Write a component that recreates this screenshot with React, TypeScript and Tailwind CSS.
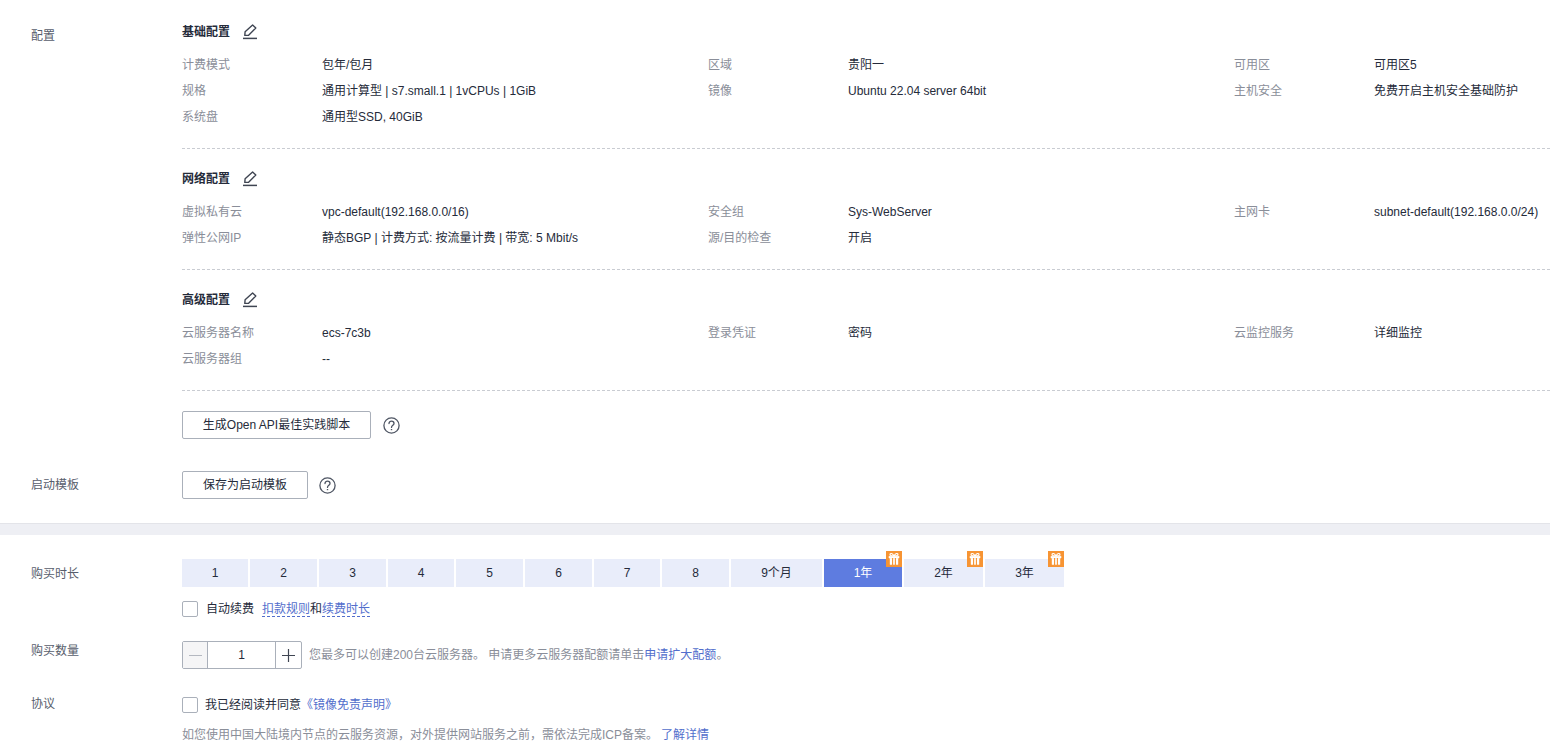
import { Fragment } from "react";

const sections = [
  {
    title: "基础配置",
    rows: [
      ["计费模式", "包年/包月", "区域", "贵阳一", "可用区", "可用区5"],
      ["规格", "通用计算型 | s7.small.1 | 1vCPUs | 1GiB", "镜像", "Ubuntu 22.04 server 64bit", "主机安全", "免费开启主机安全基础防护"],
      ["系统盘", "通用型SSD, 40GiB", "", "", "", ""],
    ],
  },
  {
    title: "网络配置",
    rows: [
      ["虚拟私有云", "vpc-default(192.168.0.0/16)", "安全组", "Sys-WebServer", "主网卡", "subnet-default(192.168.0.0/24)"],
      ["弹性公网IP", "静态BGP | 计费方式: 按流量计费 | 带宽: 5 Mbit/s", "源/目的检查", "开启", "", ""],
    ],
  },
  {
    title: "高级配置",
    rows: [
      ["云服务器名称", "ecs-7c3b", "登录凭证", "密码", "云监控服务", "详细监控"],
      ["云服务器组", "--", "", "", "", ""],
    ],
  },
];

const months = [
  { label: "1", w: "w-[66px]" },
  { label: "2", w: "w-[67px]" },
  { label: "3", w: "w-[67px]" },
  { label: "4", w: "w-[66px]" },
  { label: "5", w: "w-[67px]" },
  { label: "6", w: "w-[67px]" },
  { label: "7", w: "w-[66px]" },
  { label: "8", w: "w-[67px]" },
  { label: "9个月", w: "w-[91px]" },
  { label: "1年", w: "w-[78px]", gift: true, active: true },
  { label: "2年", w: "w-[79px]", gift: true },
  { label: "3年", w: "w-[79px]", gift: true },
];

function EditIcon() {
  return (
    <svg width="16" height="16" viewBox="0 0 16 16" fill="none" stroke="#3f4552" strokeWidth="1.4">
      <path d="M2.8 11.4 L3.1 7.8 L10.6 1 L13.8 3.9 L6.6 11.2 Z" strokeLinejoin="round" />
      <path d="M1 14.4 H15" strokeWidth="1.5" />
    </svg>
  );
}

function HelpIcon() {
  return (
    <svg width="17" height="17" viewBox="0 0 17 17" fill="none" stroke="#4f5664" strokeWidth="1.3">
      <circle cx="8.5" cy="8.5" r="7.6" />
      <path d="M6 6.6 C6 4.9 7.2 4.2 8.5 4.2 C9.9 4.2 11 5 11 6.4 C11 8.2 8.5 8.2 8.5 10.4" strokeLinecap="round" />
      <path d="M8.5 12 V13.2" strokeWidth="1.4" />
    </svg>
  );
}

function GiftIcon() {
  return (
    <span className="absolute right-0 top-[-8px] flex h-4 w-4 items-center justify-center bg-[#f79433]">
      <svg width="14" height="14" viewBox="0 0 14 14" fill="none" stroke="#fff">
        {/* bow loops */}
        <path d="M7 4 C5.5 1 3 1 3 2.6 C3 3.6 4.5 4 7 4 C9.5 4 11 3.6 11 2.6 C11 1 8.5 1 7 4" strokeWidth="1.1" />
        {/* lid and box */}
        <path d="M2 4.2 H12 V6 H2 Z" fill="#fff" strokeWidth="0.6" />
        <path d="M3 6.2 H11 V12.6 H3 Z" fill="#fff" strokeWidth="0.4" />
        <path d="M5.6 6 V13 M8.4 6 V13" stroke="#f79433" strokeWidth="1.1" />
      </svg>
    </span>
  );
}

function Checkbox() {
  return <span className="h-4 w-4 shrink-0 rounded-[2px] border border-[#aab0ba] bg-white" />;
}

export default function App() {
  return (
    <div
      className="h-[752px] w-[1550px] overflow-hidden bg-white text-xs text-[#252b3a]"
      style={{ fontFamily: '"Liberation Sans", "Noto Sans CJK SC", sans-serif' }}
    >
      {/* 配置 */}
      <div className="flex h-[523px] pl-[31px] pt-[18px]">
        <div className="w-[151px] pt-[10px] text-[#575d6c]">配置</div>
        <div className="flex-1">
          {sections.map((s) => (
            <div key={s.title} className="mb-[16px] border-b border-dashed border-[#c9ccd2] pb-[18px]">
              <div className="mb-[6px] flex h-[28px] items-center gap-[12px]">
                <span className="font-bold text-[#252b3a]">{s.title}</span>
                <EditIcon />
              </div>
              <div className="grid grid-cols-[140px_386px_140px_386px_140px_176px]">
                {s.rows.map((row, i) => (
                  <Fragment key={i}>
                    {row.map((text, j) => (
                      <div
                        key={j}
                        className={
                          j % 2 === 0
                            ? "h-[26px] whitespace-nowrap leading-[26px] text-[#8a8e99]"
                            : "h-[26px] whitespace-nowrap leading-[26px] text-[#252b3a]"
                        }
                      >
                        {text}
                      </div>
                    ))}
                  </Fragment>
                ))}
              </div>
            </div>
          ))}
          <div className="mt-[20px] flex items-center gap-[12px]">
            <button className="h-7 w-[189px] rounded-[2px] border border-[#aab0ba] text-center text-[#252b3a]">
              生成Open API最佳实践脚本
            </button>
            <HelpIcon />
          </div>
        </div>
      </div>

      {/* 启动模板 sits on the same white panel as 配置 */}
      <div className="mt-[-52px] flex h-7 items-center pl-[31px]">
        <div className="w-[151px] text-[#575d6c]">启动模板</div>
        <button className="h-7 w-[126px] rounded-[2px] border border-[#aab0ba] text-[#252b3a]">
          保存为启动模板
        </button>
        <span className="ml-[11px] flex">
          <HelpIcon />
        </span>
      </div>
      <div className="mt-[24px] h-3 border-t border-[#e3e4e9] bg-[#eeeff4]" />

      {/* 购买时长 */}
      <div className="flex pl-[31px] pt-[24px]">
        <div className="w-[151px] pt-[7px] text-[#575d6c]">购买时长</div>
        <div className="flex gap-[2px]">
          {months.map((m) => (
            <div
              key={m.label}
              className={
                m.active
                  ? `relative flex h-7 ${m.w} items-center justify-center bg-[#5e7ce0] text-white`
                  : `relative flex h-7 ${m.w} items-center justify-center bg-[#e9edfa] text-[#252b3a]`
              }
            >
              {m.label}
              {m.gift && <GiftIcon />}
            </div>
          ))}
        </div>
      </div>
      <div className="ml-[182px] mt-[14px] flex h-4 items-center">
        <Checkbox />
        <span className="ml-[8px]">自动续费</span>
        <span className="ml-[8px] border-b border-dashed border-[#526ecc] leading-[14px] text-[#526ecc]">扣款规则</span>
        <span>和</span>
        <span className="border-b border-dashed border-[#526ecc] leading-[14px] text-[#526ecc]">续费时长</span>
      </div>

      {/* 购买数量 */}
      <div className="mt-[24px] flex pl-[31px]">
        <div className="w-[151px] pt-[2px] text-[#575d6c]">购买数量</div>
        <div className="flex h-7 w-[120px] rounded-[2px] border border-[#aab0ba]">
          <div className="flex w-[25px] items-center justify-center border-r border-[#aab0ba] bg-[#f5f5f6]">
            <span className="h-px w-[13px] bg-[#b4b8c0]" />
          </div>
          <div className="flex flex-1 items-center justify-center">1</div>
          <div className="flex w-[26px] items-center justify-center border-l border-[#aab0ba]">
            <svg width="13" height="13" viewBox="0 0 13 13" stroke="#3f4552" strokeWidth="1.2">
              <path d="M0 6.5 H13 M6.5 0 V13" />
            </svg>
          </div>
        </div>
        <div className="ml-[7px] leading-7 text-[#8a8e99]">
          您最多可以创建200台云服务器。 申请更多云服务器配额请单击<span className="text-[#526ecc]">申请扩大配额</span>。
        </div>
      </div>

      {/* 协议 */}
      <div className="mt-[28px] flex pl-[31px]">
        <div className="-mt-px w-[151px] text-[#575d6c]">协议</div>
        <div className="flex h-4 items-center">
          <Checkbox />
          <span className="ml-[7px]">我已经阅读并同意</span>
          <span className="text-[#526ecc]">《镜像免责声明》</span>
        </div>
      </div>
      <div className="ml-[182px] mt-[14px] whitespace-nowrap text-[#8a8e99]">
        如您使用中国大陆境内节点的云服务资源，对外提供网站服务之前，需依法完成ICP备案。
        <span className="ml-[3px] text-[#526ecc]">了解详情</span>
      </div>
    </div>
  );
}
